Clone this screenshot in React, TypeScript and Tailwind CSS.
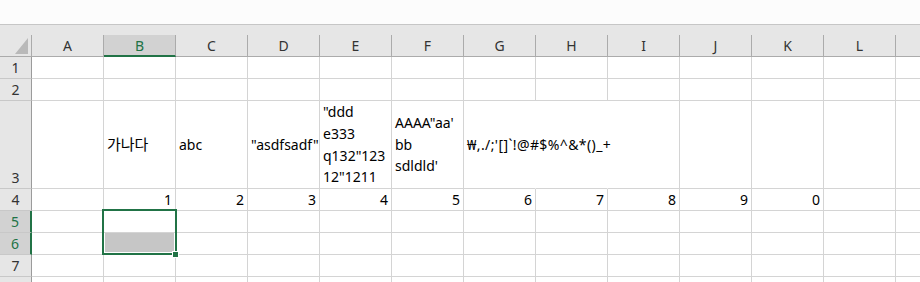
import type { ReactNode } from "react";

const COLS = ["A", "B", "C", "D", "E", "F", "G", "H", "I", "J", "K", "L", ""];

type RowDef = {
  n: number;
  label: string;
  h: string;
  cells?: Record<string, ReactNode>;
  align?: "top" | "middle" | "bottom";
};

const row3: Record<string, ReactNode> = {
  B: <span className="text-[15px] pl-[3px]">가나다</span>,
  C: <span className="pl-[3px]">abc</span>,
  D: <span className="pl-[3px]">"asdfsadf"</span>,
  E: (
    <div className="pl-[3px] leading-[21.7px]">
      "ddd
      <br />
      e333
      <br />
      q132"123
      <br />
      12"1211
    </div>
  ),
  F: (
    <div className="pl-[3px] leading-[21.7px]">
      AAAA"aa'
      <br />
      bb
      <br />
      sdldld'
    </div>
  ),
  G: (
    <span className="relative z-10 pl-[3px] whitespace-nowrap tracking-[0.4px]">
      ₩,./;'[]`!@#$%^&amp;*()_+
    </span>
  ),
};

const row4: Record<string, ReactNode> = {};
["B", "C", "D", "E", "F", "G", "H", "I", "J", "K"].forEach((c, i) => {
  row4[c] = String((i + 1) % 10);
});

const ROWS: RowDef[] = [
  { n: 1, label: "1", h: "h-[22px]" },
  { n: 2, label: "2", h: "h-[22px]" },
  { n: 3, label: "3", h: "h-[88px]", cells: row3, align: "middle" },
  { n: 4, label: "4", h: "h-[22px]", cells: row4 },
  { n: 5, label: "5", h: "h-[22px]" },
  { n: 6, label: "6", h: "h-[22px]" },
  { n: 7, label: "7", h: "h-[22px]" },
  { n: 8, label: "", h: "h-[22px]" },
];

function ColumnHeader({ label }: { label: string }) {
  const selected = label === "B";
  return (
    <div
      className={
        selected
          ? "w-[72px] shrink-0 h-[22px] flex items-center justify-center border-r border-r-[#ababab] border-b-2 border-b-[#217346] bg-[#d2d2d2] text-[#217346]"
          : "w-[72px] shrink-0 h-[22px] flex items-center justify-center border-r border-b border-[#ababab] text-[#333]"
      }
    >
      {label}
    </div>
  );
}

function RowHeader({ n, label }: { n: number; label: string }) {
  const selected = n === 5 || n === 6;
  return (
    <div
      className={
        selected
          ? "w-[32px] shrink-0 flex items-end justify-center leading-[20px] bg-[#d2d2d2] text-[#217346] border-r-2 border-r-[#217346] border-b border-b-[#c8c8c8]"
          : "w-[32px] shrink-0 flex items-end justify-center leading-[20px] bg-[#e6e6e6] text-[#333] border-r border-r-[#9b9b9b] border-b border-b-[#c8c8c8]"
      }
    >
      {label}
    </div>
  );
}

export default function App() {
  return (
    <div className="relative w-[920px] h-[282px] overflow-hidden bg-white text-[14px] text-black font-['Noto_Sans','Noto_Sans_CJK_KR',sans-serif]">
      {/* top strip */}
      <div className="h-[25px] bg-[#fcfcfc] border-b border-[#c6c6c6]" />

      {/* column headers */}
      <div className="flex items-end h-[32px] bg-[#e6e6e6]">
        <div className="w-[32px] shrink-0 h-[22px] flex items-end justify-end pr-[3px] pb-[2px] border-r border-b border-[#ababab]">
          <svg width="13" height="16" viewBox="0 0 13 16">
            <polygon points="13,0 13,16 0,16" fill="#b9b9b9" />
          </svg>
        </div>
        {COLS.map((c, i) => (
          <ColumnHeader key={i} label={c} />
        ))}
      </div>

      {/* rows */}
      {ROWS.map((r) => (
        <div key={r.n} className={`flex ${r.h}`}>
          <RowHeader n={r.n} label={r.label} />
          {COLS.map((c, i) => {
            const content = c ? r.cells?.[c] : null;
            const hideRight = r.n === 3 && (c === "G" || c === "H");
            const isNum = r.n === 4;
            return (
              <div
                key={i}
                className={[
                  "w-[72px] shrink-0 flex border-b border-[#d4d4d4]",
                  hideRight ? "border-r border-r-transparent" : "border-r",
                  r.align === "middle" ? "items-center" : "items-end leading-[20px]",
                  isNum ? "justify-end pr-[3px]" : "justify-start",
                ].join(" ")}
              >
                {content}
              </div>
            );
          })}
        </div>
      ))}

      {/* selection B5:B6 */}
      <div className="absolute left-[102px] top-[209px] w-[75px] h-[46px] border-2 border-[#217346]">
        <div className="absolute left-[1px] top-[22px] w-[69px] h-[19px] bg-[#c6c6c6]" />
      </div>
      <div className="absolute left-[172px] top-[251px] w-[7px] h-[7px] bg-[#217346] border border-white" />
    </div>
  );
}
